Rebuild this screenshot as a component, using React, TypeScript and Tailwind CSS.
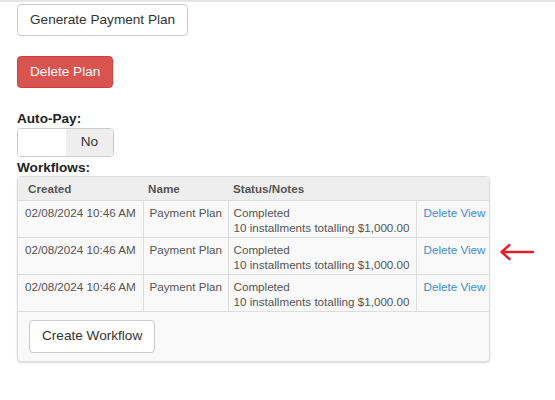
import React from "react";

const rows = [0, 1, 2];

export default function App() {
  return (
    <div className="relative w-[555px] h-[400px] bg-white border-t-2 border-[#e5e5e5] text-[#333]" style={{ fontFamily: '"Liberation Sans", Arial, sans-serif' }}>
      <div className="pl-[17px] pt-[2px]">
        <button className="h-[32px] px-[12px] border border-[#ccc] rounded-[4px] bg-white text-[13.6px] text-[#333]">
          Generate Payment Plan
        </button>
        <div className="h-[20px]" />
        <button className="h-[32px] px-[12px] border border-[#d43f3a] rounded-[4px] bg-[#d9534f] text-[13.6px] text-white">
          Delete Plan
        </button>
        <div className="mt-[22px] text-[13.6px] font-bold leading-[17px] text-[#222]">Auto-Pay:</div>
        <div className="mt-[1px] flex w-[97px] h-[29px] border border-[#ccc] rounded-[4px] overflow-hidden">
          <div className="w-[48px] bg-white" />
          <div className="flex-1 bg-[#eee] flex items-center justify-center text-[13.6px] text-[#333]">No</div>
        </div>
        <div className="mt-[2px] text-[13.6px] font-bold leading-[17px] text-[#222]">Workflows:</div>
        <div className="mt-0 w-[473px] border border-[#ddd] rounded-[4px] bg-[#f9f9f9] shadow-[0_1px_2px_rgba(0,0,0,0.15)] overflow-hidden">
          <table className="w-full border-collapse text-[11.65px] text-[#555]">
            <thead>
              <tr className="bg-[#eee] h-[23px]">
                <th className="w-[125px] text-left font-bold pl-[10px] py-0">Created</th>
                <th className="w-[85px] text-left font-bold pl-[5px] py-0">Name</th>
                <th className="w-[188px] text-left font-bold pl-[5px] py-0">Status/Notes</th>
                <th className="py-0" />
              </tr>
            </thead>
            <tbody>
              {rows.map((i) => (
                <tr key={i} className="border-t border-[#ddd] align-top">
                  <td className="pl-[7px] pt-[4px] pb-[2px] leading-[15px] border-r border-[#ddd]">02/08/2024 10:46 AM</td>
                  <td className="pl-[6px] pt-[4px] pb-[2px] leading-[15px] border-r border-[#ddd]">Payment Plan</td>
                  <td className="pl-[5px] pt-[4px] pb-[2px] leading-[15px] border-r border-[#ddd]">
                    <div>Completed</div>
                    <div>10 installments totalling $1,000.00</div>
                  </td>
                  <td className="pl-[7px] pt-[4px] pb-[2px] leading-[15px]">
                    <span className="text-[#428bca]">Delete</span>{" "}
                    <span className="text-[#428bca]">View</span>
                  </td>
                </tr>
              ))}
            </tbody>
          </table>
          <div className="border-t border-[#ddd] px-[11px] pt-[8px] pb-[8px]">
            <button className="h-[33px] px-[12px] border border-[#ccc] rounded-[4px] bg-white text-[13.6px] text-[#333]">
              Create Workflow
            </button>
          </div>
        </div>
      </div>
      <svg className="absolute left-[498px] top-[239px]" width="38" height="22" viewBox="0 0 38 22">
        <path d="M35 11 H4 M11.5 4 L3.5 11 L11.5 18" stroke="#e41f2b" strokeWidth="2.4" fill="none" strokeLinecap="round" strokeLinejoin="round" />
      </svg>
    </div>
  );
}
